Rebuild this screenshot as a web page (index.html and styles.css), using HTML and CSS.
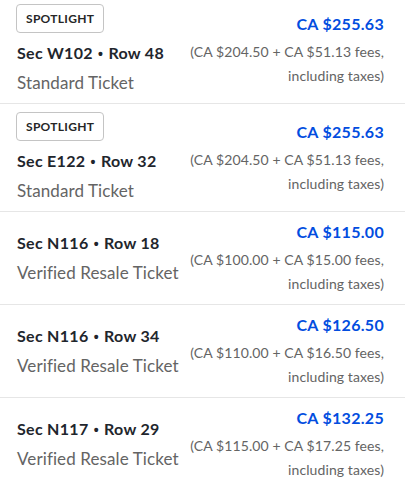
FILE: index.html
```html
<!DOCTYPE html>
<html lang="en">
<head>
<meta charset="utf-8">
<title>Tickets</title>
<link rel="stylesheet" href="styles.css">
</head>
<body>
<ul class="list">
  <li class="row">
    <div class="info">
      <span class="badge">SPOTLIGHT</span>
      <div class="seat">Sec W102 <span class="dot">•</span> Row 48</div>
      <div class="type">Standard Ticket</div>
    </div>
    <div class="price">
      <div class="total">CA $255.63</div>
      <div class="fees">(CA $204.50 + CA $51.13 fees, including taxes)</div>
    </div>
  </li>
  <li class="row">
    <div class="info">
      <span class="badge">SPOTLIGHT</span>
      <div class="seat">Sec E122 <span class="dot">•</span> Row 32</div>
      <div class="type">Standard Ticket</div>
    </div>
    <div class="price">
      <div class="total">CA $255.63</div>
      <div class="fees">(CA $204.50 + CA $51.13 fees, including taxes)</div>
    </div>
  </li>
  <li class="row">
    <div class="info">
      <div class="seat">Sec N116 <span class="dot">•</span> Row 18</div>
      <div class="type">Verified Resale Ticket</div>
    </div>
    <div class="price">
      <div class="total">CA $115.00</div>
      <div class="fees">(CA $100.00 + CA $15.00 fees, including taxes)</div>
    </div>
  </li>
  <li class="row">
    <div class="info">
      <div class="seat">Sec N116 <span class="dot">•</span> Row 34</div>
      <div class="type">Verified Resale Ticket</div>
    </div>
    <div class="price">
      <div class="total">CA $126.50</div>
      <div class="fees">(CA $110.00 + CA $16.50 fees, including taxes)</div>
    </div>
  </li>
  <li class="row">
    <div class="info">
      <div class="seat">Sec N117 <span class="dot">•</span> Row 29</div>
      <div class="type">Verified Resale Ticket</div>
    </div>
    <div class="price">
      <div class="total">CA $132.25</div>
      <div class="fees">(CA $115.00 + CA $17.25 fees, including taxes)</div>
    </div>
  </li>
</ul>
</body>
</html>
```
FILE: styles.css
```css
html, body {
  margin: 0;
  padding: 0;
  background: #ffffff;
}
body {
  font-family: Lato, "Noto Sans", sans-serif;
  color: #1f262d;
  overflow: hidden;
}
.list {
  list-style: none;
  margin: -4px 0 0 0;
  padding: 0;
}
.row {
  display: flex;
  justify-content: space-between;
  align-items: center;
  padding: 8px 21px 8px 16px;
  border-bottom: 1px solid #e6e6e6;
}
.info {
  display: flex;
  flex-direction: column;
  align-items: flex-start;
}
.badge {
  display: inline-block;
  box-sizing: border-box;
  height: 29px;
  line-height: 27px;
  padding: 0 9px;
  border: 1px solid #c4c4c4;
  border-radius: 4px;
  font-size: 12px;
  font-weight: 700;
  color: #262626;
  letter-spacing: 0.3px;
  margin-bottom: 8px;
}
.seat {
  font-size: 16px;
  font-weight: 700;
  line-height: 24px;
  color: #1f262d;
  padding-left: 1px;
  letter-spacing: 0.3px;
}
.dot {
  font-family: "Liberation Sans", Arial, sans-serif;
  font-size: 14px;
  margin: 0 1px;
}
.type {
  font-size: 17px;
  line-height: 24px;
  margin-top: 5px;
  color: #646464;
  padding-left: 1px;
  letter-spacing: 0.1px;
}
.price {
  text-align: right;
  display: flex;
  flex-direction: column;
  align-items: flex-end;
}
.total {
  font-size: 16px;
  font-weight: 700;
  line-height: 24px;
  color: #024ddf;
  margin-bottom: 4px;
  letter-spacing: 0.3px;
}
.fees {
  font-size: 14px;
  line-height: 24px;
  color: #646464;
  max-width: 200px;
  letter-spacing: 0.1px;
}
```
